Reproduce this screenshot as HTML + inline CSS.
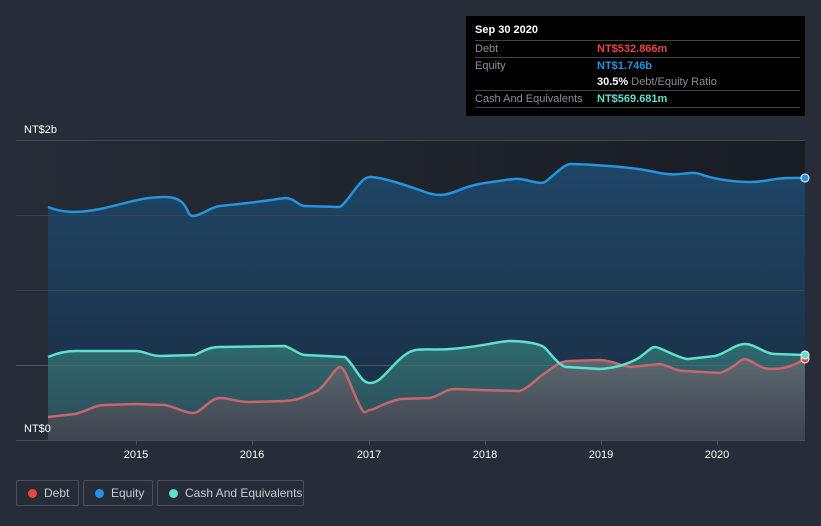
<!DOCTYPE html>
<html><head><meta charset="utf-8"><style>
html,body{margin:0;padding:0;background:#262d38;width:821px;height:526px;overflow:hidden;font-family:"Liberation Sans",sans-serif}
.tt{position:absolute;left:466px;top:16px;width:339px;height:100px;background:#000;}
.tt .h{position:absolute;left:9px;top:8px;color:#fff;font-weight:bold;font-size:11px}
.row{position:absolute;left:9px;width:325px;height:16px;border-top:1px solid #444;font-size:11px;color:#8a8f96}
.row span{position:absolute;left:122px;top:2px;font-weight:bold}
.row .l{position:absolute;left:0;top:2px}
.lg{position:absolute;top:480px;height:26px;border:1px solid #4a515c;border-radius:2px;color:#c9ccd1;font-size:12px;box-sizing:border-box;line-height:24px}
.lg i{position:absolute;left:11px;top:8px;width:9px;height:9px;border-radius:50%}
</style></head><body>
<svg width="821" height="526" style="position:absolute;left:0;top:0">
<defs>
<linearGradient id="bg" x1="0" y1="0" x2="1" y2="0"><stop offset="0" stop-color="#262c37"/><stop offset="1" stop-color="#181c23"/></linearGradient>
<linearGradient id="eq" x1="0" y1="0" x2="0" y2="1"><stop offset="0" stop-color="#1f4566"/><stop offset="1" stop-color="#1a2c42"/></linearGradient>
<linearGradient id="ca" x1="0" y1="0" x2="0" y2="1"><stop offset="0" stop-color="#2f6a70"/><stop offset="1" stop-color="#2c4a56"/></linearGradient>
<linearGradient id="de" x1="0" y1="0" x2="0" y2="1"><stop offset="0" stop-color="#5d6870"/><stop offset="1" stop-color="#3c4450"/></linearGradient>
</defs>
<rect x="16" y="140" width="789" height="300" fill="url(#bg)"/>
<path d="M48,207 C60,212 75,214 100,209 S140,197 165,197 S185,216 193,216 S210,207 220,206 S265,201 285,198 C295,198 298,206 305,206 L340,207 C350,200 360,177 370,177 S400,183 425,192 S455,187 485,183 S515,177 530,181 S545,182 550,178 S565,164 570,164 S630,166 655,172 S690,170 700,174 S730,182 750,182 S770,177 805,178 L805,440 L48,440Z" fill="url(#eq)"/>
<path d="M48,357 C60,352 70,351 75,351 L135,351 C145,351 150,356 160,356 L195,355 C205,350 210,347 220,347 L285,346 C295,350 300,355 305,355 L345,357 C355,365 360,383 370,383 S385,373 400,359 S420,351 450,349 S500,341 510,341 S540,343 545,348 S560,367 567,367 L600,369 C615,368 625,365 635,360 S650,347 655,347 S680,359 688,359 L715,356 C725,354 735,344 745,344 S765,354 775,354 L805,355 L805,440 L48,440Z" fill="url(#ca)"/>
<path d="M48,417 L75,414 C90,410 95,405 105,405 L135,404 L165,405 C175,407 185,413 193,413 S210,398 220,398 S235,402 250,402 L285,401 C300,400 305,396 315,392 S335,367 340,367 S350,385 358,402 S365,410 370,410 S380,404 400,399 L430,398 C440,396 445,389 455,389 L480,390 L520,391 C530,387 535,380 545,373 S560,361 570,361 L600,360 C615,361 620,366 630,367 L660,364 C670,366 675,371 685,371 L720,373 C735,368 740,359 745,359 S760,369 770,369 S790,368 805,359 L805,440 L48,440Z" fill="url(#de)"/>
<g stroke="#3d4756" stroke-width="1" opacity="0.8"><line x1="16" y1="140.5" x2="805" y2="140.5" stroke="#4a515c"/><line x1="16" y1="215.5" x2="805" y2="215.5"/><line x1="16" y1="290.5" x2="805" y2="290.5"/><line x1="16" y1="365.5" x2="805" y2="365.5" stroke="#4d6670"/></g>
<line x1="16" y1="440.5" x2="805" y2="440.5" stroke="#4a515c"/>
<g stroke="#4a515c"><line x1="136.5" y1="440" x2="136.5" y2="445"/><line x1="252.5" y1="440" x2="252.5" y2="445"/><line x1="369.5" y1="440" x2="369.5" y2="445"/><line x1="485.5" y1="440" x2="485.5" y2="445"/><line x1="601.5" y1="440" x2="601.5" y2="445"/><line x1="717.5" y1="440" x2="717.5" y2="445"/></g>
<g fill="none" stroke-width="2.5" stroke-linejoin="round">
<path d="M48,207 C60,212 75,214 100,209 S140,197 165,197 S185,216 193,216 S210,207 220,206 S265,201 285,198 C295,198 298,206 305,206 L340,207 C350,200 360,177 370,177 S400,183 425,192 S455,187 485,183 S515,177 530,181 S545,182 550,178 S565,164 570,164 S630,166 655,172 S690,170 700,174 S730,182 750,182 S770,177 805,178" stroke="#2394df"/>
<path d="M48,417 L75,414 C90,410 95,405 105,405 L135,404 L165,405 C175,407 185,413 193,413 S210,398 220,398 S235,402 250,402 L285,401 C300,400 305,396 315,392 S335,367 340,367 S350,385 358,402 S365,410 370,410 S380,404 400,399 L430,398 C440,396 445,389 455,389 L480,390 L520,391 C530,387 535,380 545,373 S560,361 570,361 L600,360 C615,361 620,366 630,367 L660,364 C670,366 675,371 685,371 L720,373 C735,368 740,359 745,359 S760,369 770,369 S790,368 805,359" stroke="#c8666c"/>
<path d="M48,357 C60,352 70,351 75,351 L135,351 C145,351 150,356 160,356 L195,355 C205,350 210,347 220,347 L285,346 C295,350 300,355 305,355 L345,357 C355,365 360,383 370,383 S385,373 400,359 S420,351 450,349 S500,341 510,341 S540,343 545,348 S560,367 567,367 L600,369 C615,368 625,365 635,360 S650,347 655,347 S680,359 688,359 L715,356 C725,354 735,344 745,344 S765,354 775,354 L805,355" stroke="#5fe0cc"/>
</g>
<circle cx="805" cy="359" r="4" fill="#e84545" stroke="#fff" stroke-width="1"/>
<circle cx="805" cy="355" r="4" fill="#5fe0cc" stroke="#fff" stroke-width="1"/>
<circle cx="805" cy="178" r="4" fill="#2394df" stroke="#fff" stroke-width="1"/>
<g fill="#fff" font-size="11" font-family="Liberation Sans,sans-serif">
<text x="24" y="133">NT$2b</text><text x="24" y="432">NT$0</text>
<text x="136" y="458" text-anchor="middle">2015</text><text x="252" y="458" text-anchor="middle">2016</text><text x="369" y="458" text-anchor="middle">2017</text><text x="485" y="458" text-anchor="middle">2018</text><text x="601" y="458" text-anchor="middle">2019</text><text x="717" y="458" text-anchor="middle">2020</text>
</g>
</svg>
<div class="tt">
<div class="h">Sep 30 2020</div>
<div class="row" style="top:24px"><div class="l">Debt</div><span style="color:#e84545">NT$532.866m</span></div>
<div class="row" style="top:41px"><div class="l">Equity</div><span style="color:#2394df">NT$1.746b</span></div>
<div class="row" style="top:58px;border-top:none"><span style="color:#fff">30.5% <b style="color:#8a8f96;font-weight:normal">Debt/Equity Ratio</b></span></div>
<div class="row" style="top:74px;border-bottom:1px solid #444"><div class="l">Cash And Equivalents</div><span style="color:#5fe0cc">NT$569.681m</span></div>
</div>
<div class="lg" style="left:16px;width:63px"><i style="background:#e84545"></i><span style="position:absolute;left:27px">Debt</span></div>
<div class="lg" style="left:83px;width:70px"><i style="background:#2394df"></i><span style="position:absolute;left:27px">Equity</span></div>
<div class="lg" style="left:157px;width:147px"><i style="background:#5fe0cc"></i><span style="position:absolute;left:27px">Cash And Equivalents</span></div>
</body></html>
